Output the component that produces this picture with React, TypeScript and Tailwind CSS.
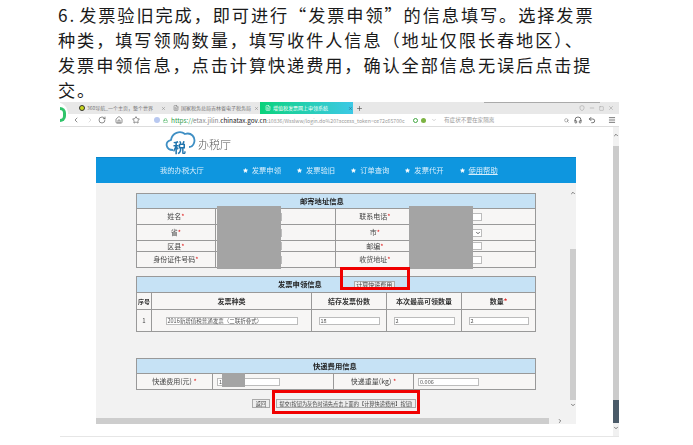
import { Star, ChevronUp, ChevronDown, ChevronLeft, ChevronRight, RotateCw, Home, X, Plus, Search, Headphones, Undo2, Menu, Lock, Minus, Square, Shield, FileText } from "lucide-react";

const navItems = ["发票申领", "发票验旧", "订单查询", "发票代开", "使用帮助"];

function Req({ text }: { text: string }) {
  return (
    <span className="text-[#444]">
      {text}
      <span className="text-[#e02020]">*</span>
    </span>
  );
}

function Box({ className, value }: { className: string; value?: string }) {
  return (
    <div className={`h-[8px] border border-[#bcbcbc] bg-white pl-[1px] text-[5.5px] leading-[6px] whitespace-nowrap text-[#555] ${className}`}>
      {value}
    </div>
  );
}

function AddressRow({ left, right, height, select, last }: { left: string; right: string; height: string; select?: boolean; last?: boolean }) {
  return (
    <div className={`grid grid-cols-[79px_120px_79px_120px] text-[7px] ${last ? "" : "border-b border-[#999]"} ${height}`}>
      <div className="flex items-center justify-center border-r border-[#999]">
        <Req text={left} />
      </div>
      <div className="flex items-center justify-end border-r border-[#999] pr-[53px]">
        <Box className="w-[20px]" />
      </div>
      <div className="flex items-center justify-center border-r border-[#999]">
        <Req text={right} />
      </div>
      <div className="flex items-center pl-[50px]">
        <div className="flex h-[8px] w-[17px] items-center justify-end border border-[#bcbcbc] bg-white">
          {select && <ChevronDown size={6} strokeWidth={3} className="text-[#333]" />}
        </div>
      </div>
    </div>
  );
}

export default function App() {
  return (
    <div
      className="relative h-[445px] w-[693px] overflow-hidden bg-white"
      style={{ fontFamily: '"Noto Sans CJK SC", "Liberation Sans", sans-serif' }}
    >
      <div className="pl-[58px] pt-[2px] text-[17.2px] leading-[25px] tracking-[1.9px] whitespace-nowrap text-[#1a1a1a]">
        <div>
          <span className="mr-[3px]">6.</span>发票验旧完成，即可进行“发票申领”的信息填写。选择发票
        </div>
        <div>种类，填写领购数量，填写收件人信息（地址仅限长春地区）、</div>
        <div>发票申领信息，点击计算快递费用，确认全部信息无误后点击提</div>
        <div>交。</div>
      </div>

      {/* 截图区域 */}
      <div className="relative ml-[60px] w-[559px] blur-[0.35px]">
        {/* tabs */}
        <div className="flex h-[12px] items-center bg-[#e8e8e8] pl-[15px] text-[5px] whitespace-nowrap text-[#777]">
          <div className="flex h-full w-[94px] items-center gap-[2px] pl-[4px]">
            <div className="h-[6px] w-[6px] shrink-0 rounded-full border border-[#333] bg-[#c9d81e]" />
            <span className="w-[72px]">360导航_一个主页，整个世界</span>
            <X size={5} />
          </div>
          <div className="flex h-full w-[91px] items-center gap-[2px] pl-[4px]">
            <FileText size={6} className="shrink-0" />
            <span className="w-[71px]">国家税务总局吉林省电子税务局</span>
            <X size={5} />
          </div>
          <div className="flex h-full w-[93px] items-center gap-[2px] bg-gradient-to-r from-[#08d27a] to-[#3cc8e6] pl-[5px] text-white">
            <FileText size={6} className="shrink-0" />
            <span className="w-[75px]">增值税发票网上申领系统</span>
            <X size={5} className="text-[#357]" />
          </div>
          <Plus size={7} className="ml-[3px] text-[#444]" />
          <div className="ml-auto flex items-center gap-[4px] pr-[5px] text-[#999]">
            <Shield size={6} />
            <Minus size={6} />
            <Square size={5} />
            <X size={6} />
          </div>
        </div>

        {/* toolbar */}
        <div className="flex h-[13px] items-center border-b border-[#ddd] bg-white text-[#555]">
          <div className="flex w-[20px] justify-end">
            <ChevronLeft size={8} />
          </div>
          <ChevronRight size={8} className="ml-[6px] text-[#ccc]" />
          <RotateCw size={8} className="ml-[4px]" />
          <Home size={8} className="ml-[9px]" />
          <Star size={8} className="ml-[9px]" />
          <div className="ml-[14px] h-[6px] w-[6px] shrink-0 rounded-full bg-[#b8c8f0]" />
          <Lock size={5} className="ml-[3px] text-[#2ca84a]" />
          <div className="ml-[3px] w-[238px] shrink-0 text-[6.4px] leading-[9px] whitespace-nowrap">
            <span className="text-[#2c9b4a]">https://</span>
            <span className="text-[#888]">etax.jilin.</span>
            <span className="text-[#222]">chinatax.gov.cn</span>
            <span className="text-[5.2px] text-[#999]">:10836/Wsslww/login.do%20?access_token=ce72c65700c</span>
          </div>
          <div className="ml-[4px] h-[5px] w-[5px] shrink-0 rounded-full border border-[#43a843]" />
          <div className="ml-[3px] h-[5px] w-[5px] shrink-0 rounded-full bg-[#7cb342]" />
          <ChevronDown size={6} className="ml-[5px] text-[#aaa]" />
          <span className="ml-[7px] text-[5.6px] whitespace-nowrap text-[#999]">有症状不要在家隔离</span>
          <div className="ml-auto flex items-center pr-[3px]">
            <Search size={5} />
            <Headphones size={8} className="ml-[5px] text-[#333]" />
            <Undo2 size={8} className="ml-[6px] text-[#333]" />
            <Menu size={8} className="ml-[12px] text-[#333]" />
          </div>
        </div>

        {/* page */}
        <div className="flex h-[310px] border-b border-[#e6e6e6]">
          <div className="w-[36px]" />
          <div className="w-[480px]">
            <div className="flex h-[30px] items-center pl-[69px]">
              <svg width="32" height="24" viewBox="0 0 32 24" className="shrink-0">
                <path d="M8 20 C1 20 -1 12 6 10 C7 3 15 0 20 4 C26 2 31 7 29 13 C28 16 26 17 24 17" fill="none" stroke="#3f8fc4" strokeWidth="1.8" />
              </svg>
              <span className="mt-[8px] -ml-[24px] w-[14px] text-[13px] leading-[15px] font-bold text-[#1f74ad]">税</span>
              <span className="mt-[4px] ml-[11px] text-[11px] leading-[15px] font-light text-[#555]">办税厅</span>
            </div>
            <div className="flex h-[26px] items-center border-t border-[#0a86cc] bg-[#0e96df] pl-[64px] text-[7.3px] text-[#d8eefb]">
              <span className="mr-[39px]">我的办税大厅</span>
              <div className="flex gap-[16px]">
                {navItems.map((item) => (
                  <div key={item} className="flex items-center gap-[4px]">
                    <Star size={5} fill="#fff" className="text-white" />
                    <span className={item === "使用帮助" ? "underline" : ""}>{item}</span>
                  </div>
                ))}
              </div>
            </div>

            <div className="flex h-[235px] bg-[#f2f2f2]">
              <div className="w-[474px] pt-[10px] pl-[40px]">
                {/* 邮寄地址信息 */}
                <div className="w-[400px] border border-[#999] bg-[#f7f6f5]">
                  <div className="flex h-[15px] items-center border-b border-[#999] bg-[#c6e2f5] pl-[163px] text-[7.3px] font-bold text-[#222]">
                    邮寄地址信息
                  </div>
                  <AddressRow left="姓名" right="联系电话" height="h-[16px]" />
                  <AddressRow left="省" right="市" height="h-[16px]" select />
                  <AddressRow left="区县" right="邮编" height="h-[11px]" />
                  <AddressRow left="身份证件号码" right="收货地址" height="h-[15px]" last />
                </div>

                {/* 发票申领信息 */}
                <div className="mt-[8px] w-[400px] border border-[#999] bg-[#f7f6f5]">
                  <div className="flex h-[16px] items-center border-b border-[#999] bg-[#c6e2f5] pl-[141px] text-[7.3px] font-bold text-[#222]">
                    发票申领信息
                    <div className="ml-[32px] flex h-[8px] w-[41px] items-center justify-center border border-[#aaa] bg-[#eee] text-[6px] font-normal text-[#444]">
                      计算快递费用
                    </div>
                  </div>
                  <div className="grid h-[17px] grid-cols-[15px_160px_75px_75px_73px] border-b border-[#999] text-[7px] font-bold text-[#333]">
                    <div className="flex items-center justify-center border-r border-[#999] text-[6px]">序号</div>
                    <div className="flex items-center justify-center border-r border-[#999]">发票种类</div>
                    <div className="flex items-center justify-center border-r border-[#999]">结存发票份数</div>
                    <div className="flex items-center justify-center border-r border-[#999]">本次最高可领数量</div>
                    <div className="flex items-center justify-center">
                      <span>
                        数量<span className="text-[#e02020]">*</span>
                      </span>
                    </div>
                  </div>
                  <div className="grid h-[21px] grid-cols-[15px_160px_75px_75px_73px] text-[6px] text-[#444]">
                    <div className="flex items-center justify-center border-r border-[#999]">1</div>
                    <div className="flex items-center justify-center border-r border-[#999]">
                      <Box value="2016新增值税普通发票（二联折叠式）" className="w-[132px]" />
                    </div>
                    <div className="flex items-center justify-center border-r border-[#999]">
                      <Box value="18" className="w-[61px]" />
                    </div>
                    <div className="flex items-center justify-center border-r border-[#999]">
                      <Box value="2" className="w-[61px]" />
                    </div>
                    <div className="flex items-center justify-center">
                      <Box value="2" className="w-[60px]" />
                    </div>
                  </div>
                </div>

                {/* 快递费用信息 */}
                <div className="mt-[26px] w-[400px] border border-[#999] bg-[#f7f6f5]">
                  <div className="flex h-[15px] items-center border-b border-[#999] bg-[#c6e2f5] pl-[176px] text-[7.3px] font-bold text-[#222]">
                    快递费用信息
                  </div>
                  <div className="grid h-[15px] grid-cols-[76px_121px_80px_1fr] text-[7px] text-[#444]">
                    <div className="flex items-center justify-center border-r border-[#999]">
                      <span>
                        快递费用(元) <span className="text-[#e02020]">*</span>
                      </span>
                    </div>
                    <div className="flex items-center border-r border-[#999] pl-[4px]">
                      <Box value="1" className="w-[63px]" />
                    </div>
                    <div className="flex items-center justify-center border-r border-[#999]">
                      <span>
                        快递重量(kg) <span className="text-[#e02020]">*</span>
                      </span>
                    </div>
                    <div className="flex items-center pl-[4px]">
                      <Box value="0.006" className="w-[61px]" />
                    </div>
                  </div>
                </div>

                <div className="mt-[9px] flex items-center pl-[116px] text-[5.2px] text-[#444]">
                  <div className="flex h-[9px] w-[18px] items-center justify-center border border-[#aaa] bg-[#eee]">返回</div>
                  <div className="ml-[6px] flex h-[9px] w-[140px] items-center justify-center border border-[#aaa] bg-[#eee] whitespace-nowrap">
                    提交(按钮为灰色时请先点击上面的【计算快递费用】按钮)
                  </div>
                </div>
              </div>

              {/* 内层滚动条 */}
              <div className="flex w-[6px] flex-col items-center bg-[#f2f2f2] pt-[7px] text-[#555]">
                <ChevronUp size={6} strokeWidth={3} />
                <div className="mt-[53px] h-[151px] w-full bg-[#cdcdcd]" />
                <ChevronDown size={6} strokeWidth={3} className="mt-[2px]" />
              </div>
            </div>

            {/* 横向滚动条 */}
            <div className="flex h-[6px] items-center bg-[#f2f2f2] text-[#555]">
              <div className="h-full w-[453px] bg-[#cdcdcd]" />
              <ChevronRight size={6} strokeWidth={3} className="ml-[8px]" />
            </div>
          </div>

          <div className="w-[37px]" />

          {/* 外层滚动条 */}
          <div className="flex w-[6px] flex-col items-center bg-[#f1f1f1] pt-[5px] text-[#555]">
            <ChevronUp size={6} strokeWidth={3} />
            <div className="mt-[8px] h-[254px] w-full bg-[#cbcbcb]" />
            <div className="h-[23px] w-full bg-[#4a5a68]" />
            <ChevronDown size={6} strokeWidth={3} className="mt-[2px]" />
          </div>
        </div>

        {/* 遮挡和红框 */}
        <div className="absolute top-0 right-[19px] h-[1px] w-[116px] bg-[#aaa]" />
        <div className="absolute top-[104px] left-[157px] h-[63px] w-[64px] bg-[#a4a4a4]" />
        <div className="absolute top-[104px] left-[349px] h-[63px] w-[64px] bg-[#a4a4a4]" />
        <div className="absolute top-[271px] left-[162px] h-[14px] w-[23px] bg-[#a4a4a4]" />
        <div className="absolute top-[165px] left-[280px] h-[23px] w-[70px] border-[3px] border-[#f00000]" />
        <div className="absolute top-[288px] left-[212px] h-[24px] w-[148px] border-[3px] border-[#f00000]" />
        <div className="absolute top-0 -left-[6px] h-[24px] w-[14px] rounded-r-full bg-white" />
        <div className="absolute top-[5px] left-0 h-[15px] w-[6px] rounded-r-full border-y-[3px] border-r-[3px] border-[#2fc46a]" />
      </div>
    </div>
  );
}
